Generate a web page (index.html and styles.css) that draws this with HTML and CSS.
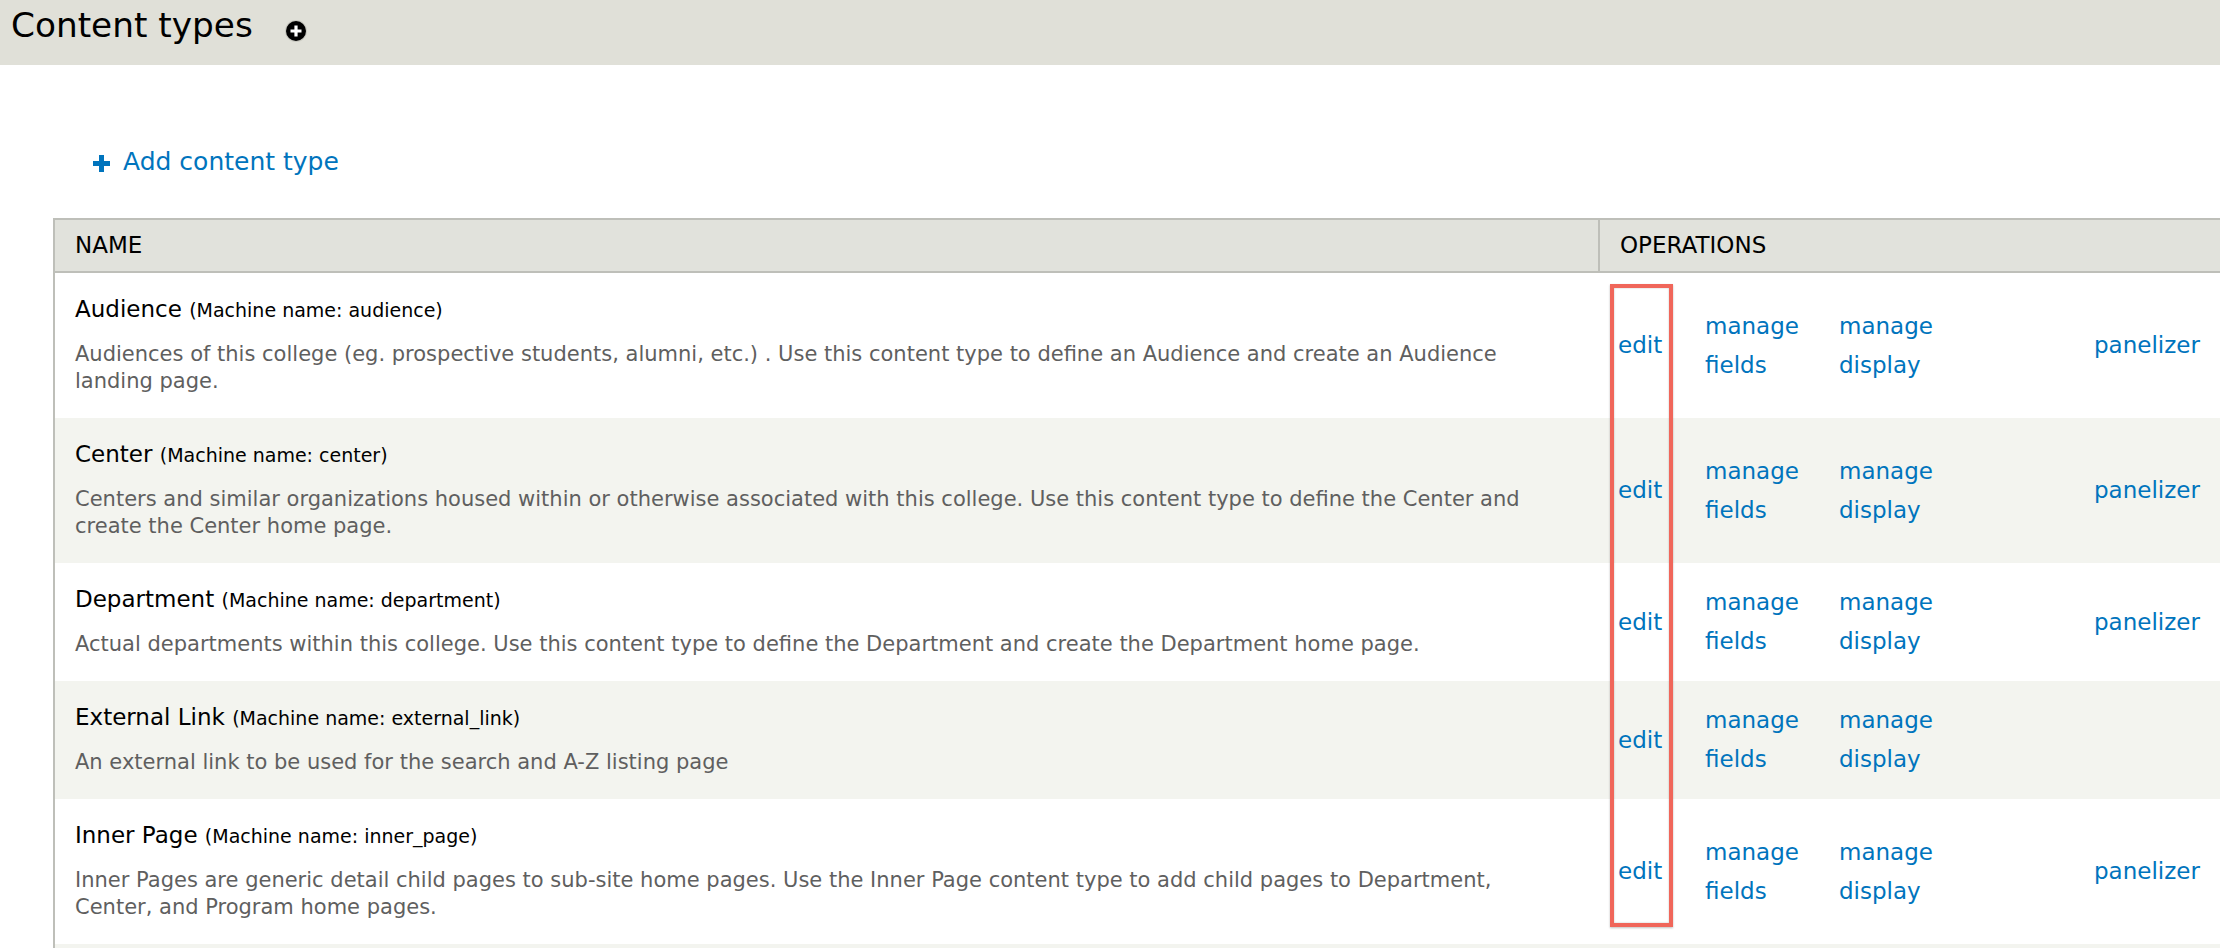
FILE: index.html
```html
<!DOCTYPE html>
<html lang="en">
<head>
<meta charset="utf-8">
<title>Content types</title>
<link rel="stylesheet" href="styles.css">
</head>
<body>
<div class="branding">
  <h1 class="page-title">Content types</h1>
  <a class="shortcut" href="#" title="Add to shortcuts">
    <svg class="shortcut-icon" width="24" height="24" viewBox="0 0 24 24" aria-hidden="true">
      <circle cx="12" cy="12" r="11" fill="#c8c8c0"/>
      <circle cx="12" cy="12" r="10" fill="#000"/>
      <path d="M10.4 6.5h3.2v3.9h3.9v3.2h-3.9v3.9h-3.2v-3.9H6.5v-3.2h3.9z" fill="#fff"/>
    </svg>
  </a>
</div>
<div class="page">
  <ul class="action-links">
    <li><a href="#"><svg class="plus" width="17" height="17" viewBox="0 0 17 17" aria-hidden="true"><path d="M6 0h5v6h6v5h-6v6H6v-6H0V6h6z" fill="#0074bd"/></svg><span>Add content type</span></a></li>
  </ul>
  <div class="table-wrap">
    <table class="types">
      <colgroup>
        <col class="c-name">
        <col class="c-edit">
        <col class="c-fields">
        <col class="c-display">
        <col class="c-delete">
        <col class="c-panel">
      </colgroup>
      <thead>
        <tr><th class="th-name">Name</th><th class="th-ops" colspan="5">Operations</th></tr>
      </thead>
      <tbody>
        <tr class="odd">
          <td class="name-cell"><div class="type-name">Audience <small>(Machine name: audience)</small></div><div class="description">Audiences of this college (eg. prospective students, alumni, etc.) . Use this content type to define an Audience and create an Audience landing page.</div></td>
          <td class="op op-edit"><a href="#">edit</a></td>
          <td class="op"><a href="#">manage fields</a></td>
          <td class="op"><a href="#">manage display</a></td>
          <td class="op"></td>
          <td class="op"><a href="#">panelizer</a></td>
        </tr>
        <tr class="even">
          <td class="name-cell"><div class="type-name">Center <small>(Machine name: center)</small></div><div class="description">Centers and similar organizations housed within or otherwise associated with this college. Use this content type to define the Center and create the Center home page.</div></td>
          <td class="op op-edit"><a href="#">edit</a></td>
          <td class="op"><a href="#">manage fields</a></td>
          <td class="op"><a href="#">manage display</a></td>
          <td class="op"></td>
          <td class="op"><a href="#">panelizer</a></td>
        </tr>
        <tr class="odd">
          <td class="name-cell"><div class="type-name">Department <small>(Machine name: department)</small></div><div class="description">Actual departments within this college. Use this content type to define the Department and create the Department home page.</div></td>
          <td class="op op-edit"><a href="#">edit</a></td>
          <td class="op"><a href="#">manage fields</a></td>
          <td class="op"><a href="#">manage display</a></td>
          <td class="op"></td>
          <td class="op"><a href="#">panelizer</a></td>
        </tr>
        <tr class="even">
          <td class="name-cell"><div class="type-name">External Link <small>(Machine name: external_link)</small></div><div class="description">An external link to be used for the search and A-Z listing page</div></td>
          <td class="op op-edit"><a href="#">edit</a></td>
          <td class="op"><a href="#">manage fields</a></td>
          <td class="op"><a href="#">manage display</a></td>
          <td class="op"></td>
          <td class="op"></td>
        </tr>
        <tr class="odd">
          <td class="name-cell"><div class="type-name">Inner Page <small>(Machine name: inner_page)</small></div><div class="description">Inner Pages are generic detail child pages to sub-site home pages. Use the Inner Page content type to add child pages to Department, Center, and Program home pages.</div></td>
          <td class="op op-edit"><a href="#">edit</a></td>
          <td class="op"><a href="#">manage fields</a></td>
          <td class="op"><a href="#">manage display</a></td>
          <td class="op"></td>
          <td class="op"><a href="#">panelizer</a></td>
        </tr>
        <tr class="even spacer-row">
          <td class="name-cell"></td>
          <td class="op"></td>
          <td class="op"></td>
          <td class="op"></td>
          <td class="op"></td>
          <td class="op"></td>
        </tr>
      </tbody>
    </table>
    <div class="highlight" aria-hidden="true"></div>
  </div>
</div>
</body>
</html>
```

FILE: styles.css
```css
html, body {
  margin: 0;
  padding: 0;
  overflow: hidden;
  background: #fff;
}
body {
  font-family: "DejaVu Sans", Verdana, sans-serif;
  font-size: 23px;
  color: #000;
}
a {
  color: #0074bd;
  text-decoration: none;
}

/* Title bar */
.branding {
  display: flex;
  align-items: flex-start;
  height: 65px;
  background: #e0e0d8;
}
.page-title {
  margin: 0;
  padding-left: 11px;
  font-size: 34.3px;
  line-height: 51px;
  font-weight: normal;
  color: #000;
}
.shortcut {
  display: block;
  margin-left: 31px;
  margin-top: 19px;
  line-height: 0;
}

/* Content */
.page {
  padding-left: 53px;
}
.action-links {
  list-style: none;
  margin: 80px 0 39px 0;
  padding: 0 0 0 40px;
}
.action-links a {
  display: inline-flex;
  align-items: center;
  font-size: 25px;
  line-height: 34px;
}
.action-links .plus {
  margin-right: 13px;
  margin-top: 3px;
}

.table-wrap {
  position: relative;
}
.types {
  table-layout: fixed;
  width: 2202px;
  border-collapse: separate;
  border-spacing: 0;
}
.c-name { width: 1547px; }
.c-edit { width: 86px; }
.c-fields { width: 134px; }
.c-display { width: 134px; }
.c-delete { width: 121px; }
.c-panel { width: 180px; }

.types th {
  background: #e1e2dc;
  border-top: 2px solid #bebfb9;
  border-bottom: 2px solid #bebfb9;
  padding: 12px 20px;
  line-height: 27px;
  font-size: 23px;
  font-weight: normal;
  text-align: left;
  text-transform: uppercase;
}
.types .th-name {
  border-left: 2px solid #bebfb9;
  border-right: 2px solid #bebfb9;
}

.types tr.odd { background: #fff; }
.types tr.even { background: #f3f4ef; }

.types td {
  padding: 19px;
}
.types .op-edit {
  padding-left: 18px;
}
.types .name-cell {
  border-left: 2px solid #bebfb9;
  padding: 19px 55px 19px 20px;
  vertical-align: top;
}
.type-name {
  line-height: 35px;
  color: #000;
}
.type-name small {
  font-size: 19px;
}
.description {
  margin: 13px 0 4px 0;
  font-size: 21px;
  line-height: 27px;
  color: #5f5f5f;
}
.types .op {
  vertical-align: middle;
  line-height: 39px;
}
.spacer-row td {
  height: 80px;
}

/* annotation box */
.highlight {
  position: absolute;
  left: 1557px;
  top: 66px;
  width: 55px;
  height: 635px;
  border: 4px solid #f0665a;
  box-shadow: 0 1px 2px rgba(0, 0, 0, 0.25), inset 0 0 2px rgba(0, 0, 0, 0.25);
}
```
